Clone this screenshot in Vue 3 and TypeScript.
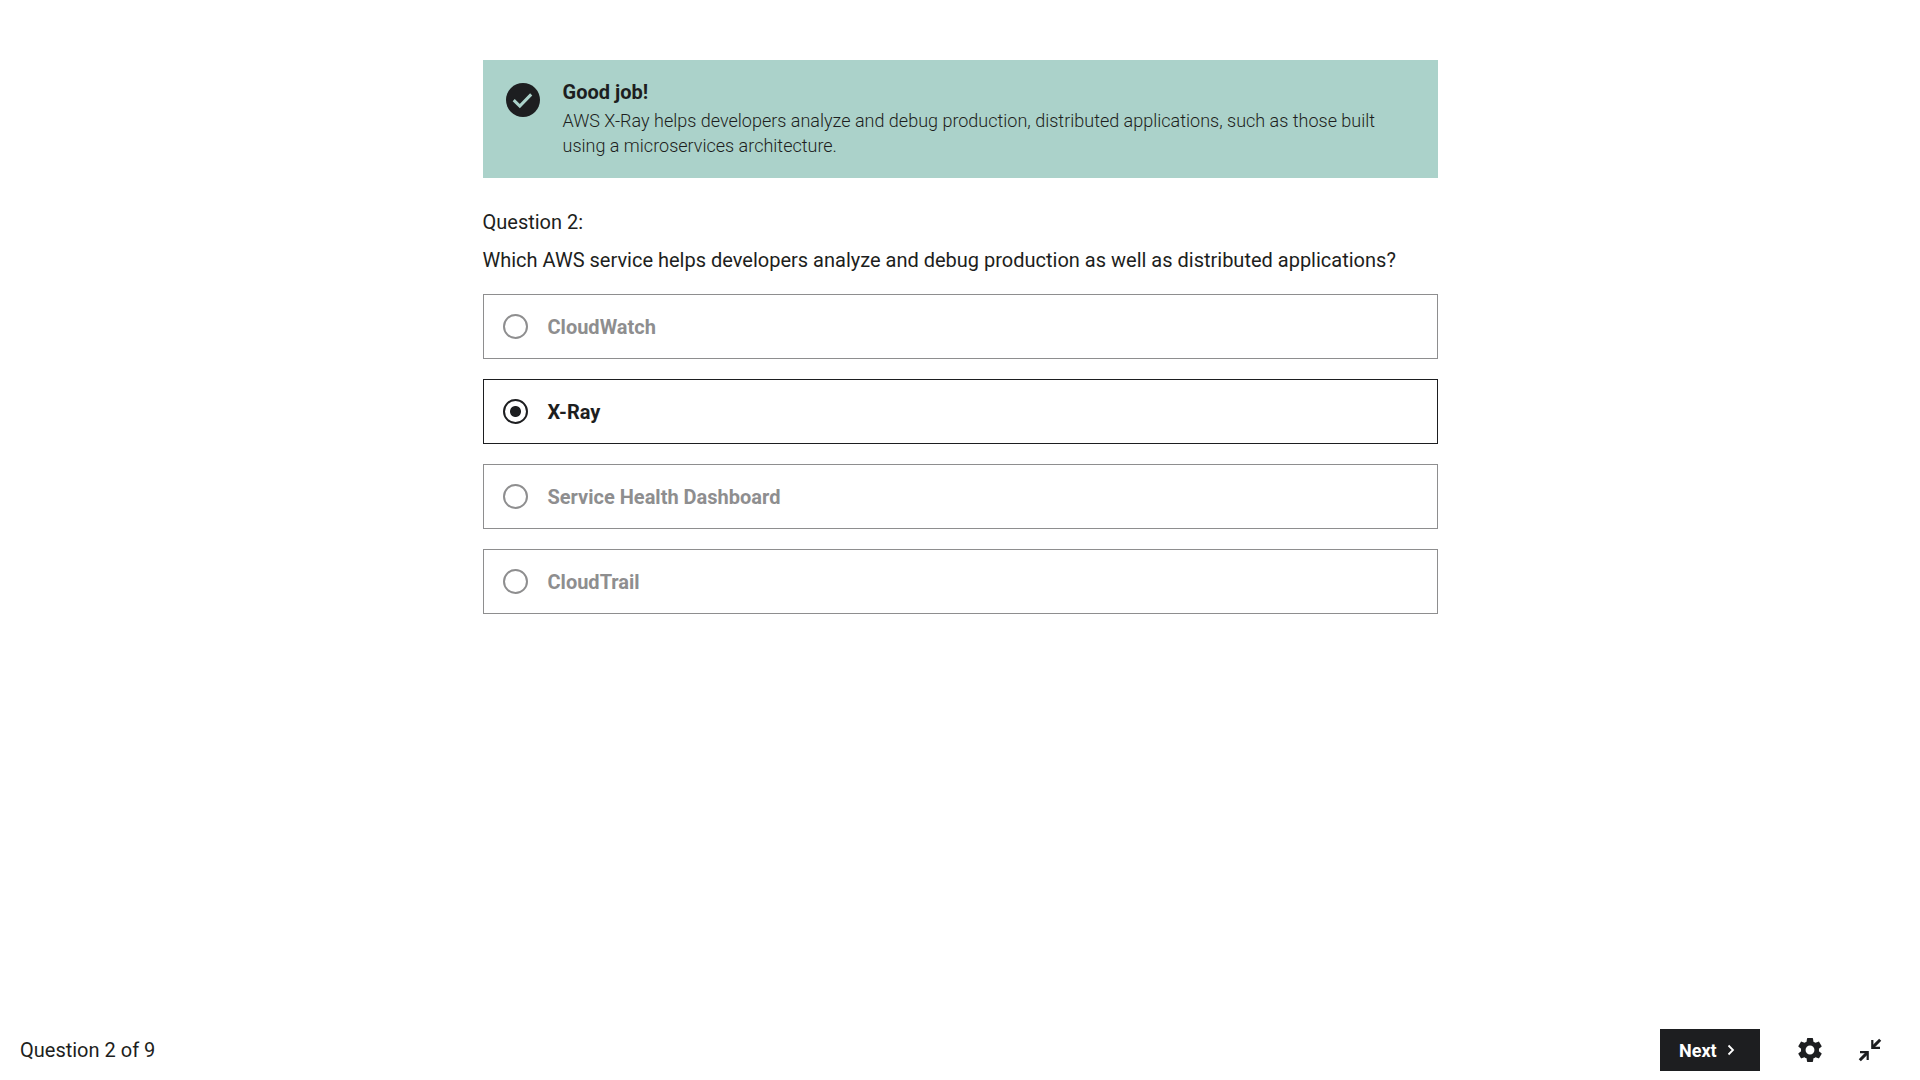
<script setup lang="ts">
import { ref } from 'vue'

interface Option {
  id: string
  label: string
}

const current = 2
const total = 9
const selected = ref('x-ray')
const options: Option[] = [
  { id: 'cloudwatch', label: 'CloudWatch' },
  { id: 'x-ray', label: 'X-Ray' },
  { id: 'health', label: 'Service Health Dashboard' },
  { id: 'cloudtrail', label: 'CloudTrail' },
]
</script>

<template>
  <div class="quiz">
    <main class="content">
      <section class="feedback" role="status">
        <svg class="feedback-icon" viewBox="0 0 34 34" aria-hidden="true">
          <circle cx="17" cy="17" r="17" fill="#1d1e20" />
          <path d="M7.7 17.2 13.8 23.1 25.2 11.4" fill="none" stroke="#abd2ca" stroke-width="3" />
        </svg>
        <div class="feedback-body">
          <h2 class="feedback-title">Good job!</h2>
          <p class="feedback-text">
            AWS X-Ray helps developers analyze and debug production, distributed applications, such as those built
            using a microservices architecture.
          </p>
        </div>
      </section>

      <h1 id="prompt" class="prompt">
        <span class="prompt-line">Question {{ current }}:</span>
        <span class="prompt-line">Which AWS service helps developers analyze and debug production as well as distributed applications?</span>
      </h1>

      <div class="options" role="radiogroup" aria-labelledby="prompt">
        <label
          v-for="option in options"
          :key="option.id"
          class="option"
          :class="{ selected: option.id === selected }"
          :for="option.id"
        >
          <input :id="option.id" v-model="selected" class="radio" type="radio" name="answer" :value="option.id" />
          <span>{{ option.label }}</span>
        </label>
      </div>
    </main>

    <footer class="footer">
      <span class="progress">Question {{ current }} of {{ total }}</span>
      <div class="actions">
        <button class="next" type="button">
          Next
          <svg width="8" height="12" viewBox="0 0 8 12" aria-hidden="true">
            <path d="M1.5 1.5 6 6 1.5 10.5" fill="none" stroke="#fff" stroke-width="1.8" />
          </svg>
        </button>
        <div class="tools">
          <button class="icon-button" type="button" aria-label="Settings">
            <svg width="24" height="24" viewBox="2 2 20 20" aria-hidden="true">
              <path
                fill="#1d1e20"
                d="M19.43 12.98c.04-.32.07-.64.07-.98s-.03-.66-.07-.98l2.11-1.65c.19-.15.24-.42.12-.64l-2-3.46c-.12-.22-.39-.3-.61-.22l-2.49 1c-.52-.4-1.08-.73-1.69-.98l-.38-2.65C14.46 2.18 14.25 2 14 2h-4c-.25 0-.46.18-.49.42l-.38 2.65c-.61.25-1.17.59-1.69.98l-2.49-1c-.23-.09-.49 0-.61.22l-2 3.46c-.13.22-.07.49.12.64l2.11 1.65c-.04.32-.07.65-.07.98s.03.66.07.98l-2.11 1.65c-.19.15-.24.42-.12.64l2 3.46c.12.22.39.3.61.22l2.49-1c.52.4 1.08.73 1.69.98l.38 2.65c.03.24.24.42.49.42h4c.25 0 .46-.18.49-.42l.38-2.65c.61-.25 1.17-.59 1.69-.98l2.49 1c.23.09.49 0 .61-.22l2-3.46c.12-.22.07-.49-.12-.64l-2.11-1.65zM12 15.7a3.7 3.7 0 1 1 0-7.4 3.7 3.7 0 0 1 0 7.4z"
              />
            </svg>
          </button>
          <button class="icon-button" type="button" aria-label="Exit full screen">
            <svg width="24" height="24" viewBox="0 0 24 24" fill="none" stroke="#1d1e20" aria-hidden="true">
              <path d="M14.3 2v7.8H22M2 14.2h7.7V22" stroke-width="2.2" />
              <path d="M22.2 1.8 14.6 9.4M1.8 22.2 9.4 14.6" stroke-width="3" />
            </svg>
          </button>
        </div>
      </div>
    </footer>
  </div>
</template>

<style>
body {
  margin: 0;
  background: #fff;
}
</style>

<style scoped>
.quiz {
  box-sizing: border-box;
  display: flex;
  flex-direction: column;
  min-height: 100vh;
  color: #1d1e20;
  font-family: Roboto, "Liberation Sans", sans-serif;
  font-size: 20px;
  line-height: 24px;
}

.content {
  box-sizing: border-box;
  flex: 1;
  width: 100%;
  max-width: 955px;
  margin: 0 auto;
  padding-top: 60px;
}

.feedback {
  display: flex;
  align-items: flex-start;
  gap: 23px;
  padding: 20px 60px 20px 23px;
  background: #abd2ca;
}

.feedback-icon {
  flex: none;
  width: 34px;
  height: 34px;
  margin-top: 3px;
}

.feedback-title {
  margin: 0 0 4px;
  font-size: 20px;
  line-height: 24px;
  font-weight: 700;
}

.feedback-text {
  margin: 0;
  font-size: 18px;
  line-height: 25px;
  font-weight: 300;
}

.prompt {
  display: flex;
  flex-direction: column;
  gap: 14px;
  margin: 32px 0 22px;
  font-size: 20px;
  line-height: 24px;
  font-weight: 400;
}

.options {
  display: flex;
  flex-direction: column;
  gap: 20px;
}

.option {
  box-sizing: border-box;
  display: flex;
  align-items: center;
  gap: 20px;
  min-height: 65px;
  padding: 0 19px;
  border: 1px solid #8e8e8f;
  color: #8e8e8f;
  font-weight: 700;
  cursor: pointer;
}

.option.selected {
  border-color: #1d1e20;
  color: #1d1e20;
}

.radio {
  box-sizing: border-box;
  appearance: none;
  flex: none;
  width: 25px;
  height: 25px;
  margin: 0;
  border: 2px solid #8e8e8f;
  border-radius: 50%;
}

.radio:checked {
  border-color: #1d1e20;
  background: radial-gradient(circle, #1d1e20 5px, transparent 6px);
}

.footer {
  display: flex;
  align-items: center;
  justify-content: space-between;
  padding: 9px 38px 9px 20px;
}

.actions {
  display: flex;
  align-items: center;
  gap: 38px;
}

.tools {
  display: flex;
  align-items: center;
  gap: 36px;
}

.next {
  box-sizing: border-box;
  display: flex;
  align-items: center;
  justify-content: space-between;
  width: 100px;
  height: 42px;
  padding: 0 25px 0 19px;
  border: 0;
  background: #1d1e20;
  color: #fff;
  font-family: inherit;
  font-size: 18px;
  font-weight: 700;
}

.icon-button {
  display: flex;
  padding: 0;
  border: 0;
  background: none;
}
</style>
